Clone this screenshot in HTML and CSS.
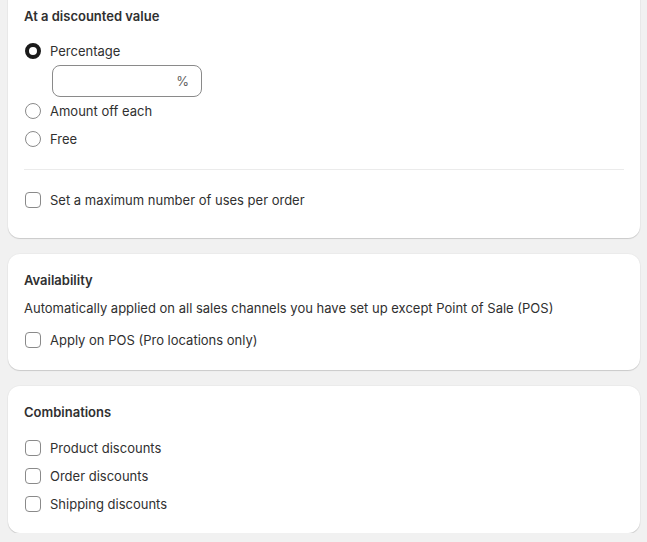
FILE: index.html
```html
<!DOCTYPE html>
<html lang="en">
<head>
<meta charset="utf-8">
<title>Discount</title>
<link rel="stylesheet" href="styles.css">
</head>
<body>
<div class="page">
  <section class="card card-first">
    <h2 class="title">At a discounted value</h2>
    <div class="choices first-choices">
      <label class="choice">
        <span class="radio radio-on"></span>
        <span class="label">Percentage</span>
      </label>
      <div class="field">
        <span class="suffix">%</span>
      </div>
      <label class="choice">
        <span class="radio"></span>
        <span class="label">Amount off each</span>
      </label>
      <label class="choice">
        <span class="radio"></span>
        <span class="label">Free</span>
      </label>
    </div>
    <hr class="divider">
    <label class="choice">
      <span class="check"></span>
      <span class="label">Set a maximum number of uses per order</span>
    </label>
  </section>

  <section class="card card-avail">
    <h2 class="title">Availability</h2>
    <p class="text">Automatically applied on all sales channels you have set up except Point of Sale (POS)</p>
    <label class="choice">
      <span class="check"></span>
      <span class="label">Apply on POS (Pro locations only)</span>
    </label>
  </section>

  <section class="card card-comb">
    <h2 class="title">Combinations</h2>
    <div class="choices comb-choices">
      <label class="choice">
        <span class="check"></span>
        <span class="label">Product discounts</span>
      </label>
      <label class="choice">
        <span class="check"></span>
        <span class="label">Order discounts</span>
      </label>
      <label class="choice">
        <span class="check"></span>
        <span class="label">Shipping discounts</span>
      </label>
    </div>
  </section>
</div>
</body>
</html>
```

FILE: styles.css
```css
* { box-sizing: border-box; }
html, body {
  margin: 0;
  padding: 0;
  background: #f1f1f1;
}
body {
  font-family: Inter, "Noto Sans", "Liberation Sans", sans-serif;
  font-size: 13px;
  line-height: 20px;
  color: #303030;
}
.page {
  display: flex;
  flex-direction: column;
  gap: 16px;
  padding: 0 7px 0 8px;
}
.card {
  background: #ffffff;
  border-radius: 12px;
  padding: 16px;
  box-shadow: 0 1px 1px rgba(0, 0, 0, 0.14), 0 0 0 1px rgba(0, 0, 0, 0.025);
}
.card-first {
  margin-top: -6px;
  padding-top: 12px;
  padding-bottom: 28px;
  border-radius: 0 0 12px 12px;
}
.card-avail { padding-bottom: 20px; }
.card-comb { padding-bottom: 19px; }
.title {
  margin: 0;
  font-size: 13px;
  font-weight: 600;
  line-height: 20px;
  color: #303030;
}
.text {
  margin: 8px 0 12px;
}
.choices {
  display: flex;
  flex-direction: column;
  gap: 8px;
}
.first-choices { margin-top: 15px; }
.comb-choices { margin-top: 16px; }
.choice {
  display: flex;
  align-items: center;
  gap: 9px;
  height: 20px;
  padding-left: 1px;
}
.label { color: #303030; }
.radio {
  width: 16px;
  height: 16px;
  border-radius: 50%;
  border: 1px solid #8a8a8a;
  background: #fff;
  flex: none;
}
.radio-on {
  border: 4.5px solid #1a1a1a;
}
.check {
  width: 16px;
  height: 16px;
  border-radius: 4px;
  border: 1px solid #8a8a8a;
  background: #fff;
  flex: none;
}
.field {
  margin: -4px 0 -4px 28px;
  width: 150px;
  height: 32px;
  border: 1px solid #8a8a8a;
  border-radius: 8px;
  display: flex;
  align-items: center;
  justify-content: flex-end;
  padding-right: 12px;
}
.suffix {
  color: #616161;
}
.divider {
  border: none;
  border-top: 1px solid #ebebeb;
  margin: 20px 0 20px;
}
```
